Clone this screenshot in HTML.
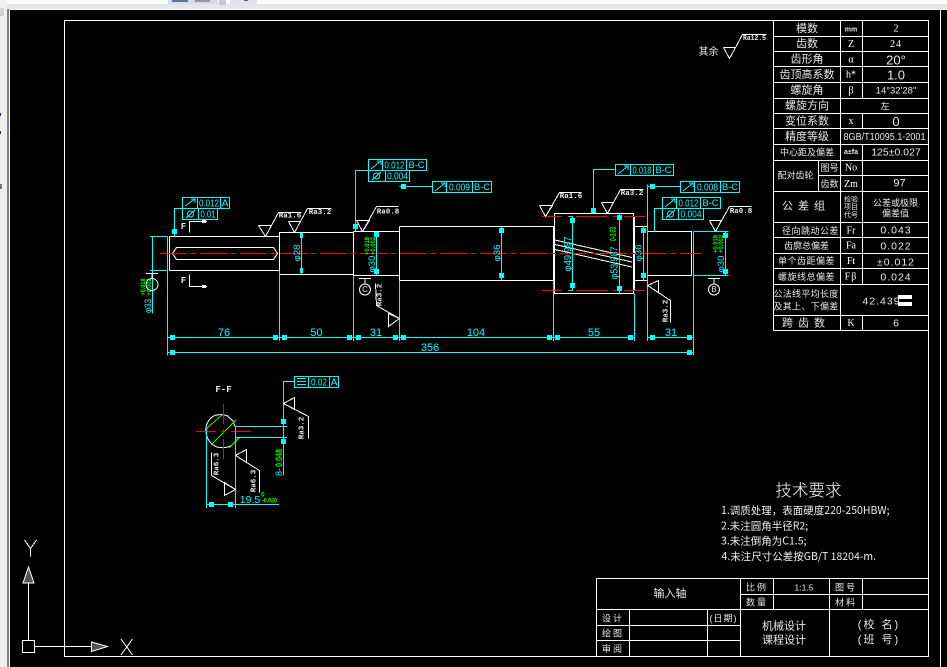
<!DOCTYPE html>
<html>
<head>
<meta charset="utf-8">
<style>
html,body{margin:0;padding:0;width:947px;height:667px;overflow:hidden;background:#000}
svg{display:block;position:absolute;left:0;top:0}
.l{fill:none;stroke-width:1;shape-rendering:crispEdges}
.w{stroke:#fff}.c{stroke:#0ff}.g{stroke:#0f0}.r{stroke:#f00}
text{font-family:"Liberation Sans","Noto Sans CJK SC",sans-serif;text-anchor:middle;dominant-baseline:central}
.t{fill:#e8e8e8;font-size:11px}
.s{fill:#e8e8e8;font-size:9px}
.u{fill:#e8e8e8;font-size:7px}
.m{fill:#fff;font-size:10px;font-family:"Liberation Serif","Noto Sans CJK SC",serif}
.d{fill:#0ff;font-size:11px}
.f{fill:#0ff;font-size:10.5px}
.q{fill:#0f0;font-size:6.5px;font-weight:bold}
.a{fill:#eee;font-size:7.5px;font-weight:bold;font-family:"Liberation Mono",monospace}
.j{fill:#eee;font-size:10.5px;text-anchor:start;font-family:"Noto Sans CJK SC","Liberation Serif",serif}
</style>
</head>
<body>
<svg width="947" height="667" viewBox="0 0 947 667" xmlns="http://www.w3.org/2000/svg">
<rect width="947" height="667" fill="#000"/>
<!-- window chrome -->
<rect x="0" y="0" width="947" height="9" fill="#e4e6ea"/>
<rect x="0" y="0" width="947" height="4" fill="#fbfbfb"/>
<rect x="168" y="0" width="50" height="4" fill="#d6dbe4"/>
<rect x="172" y="0" width="16" height="2" fill="#5577aa"/>
<rect x="195" y="0" width="15" height="2" fill="#9a9a9a"/>
<rect x="219" y="0" width="7" height="5" fill="#c8c8c8"/>
<rect x="230" y="0" width="27" height="4" fill="#e0e4ea"/>
<rect x="244" y="0" width="4" height="1" fill="#446699"/>
<rect x="0" y="0" width="7" height="667" fill="#efefef"/>
<rect x="7" y="9" width="2" height="658" fill="#808080"/>
<rect x="0" y="8" width="4" height="8" fill="#cfcfcf"/>
<rect x="0" y="113" width="1" height="3" fill="#003f8f"/>
<rect x="0" y="131" width="1" height="3" fill="#003f8f"/>
<rect x="0" y="184" width="2" height="5" fill="#777"/>
<path class="l w" d="M9.500 9.500H947M9.500 9.500V667M940.500 9.500V667"/>

<!-- drawing frame -->
<path class="l w" d="M64.500 20.500H928.500V656.500H64.500Z"/>

<!-- Parameter table -->
<path class="l w" d="M773.500 20.500V330.500M840.500 20.500V330.500M862.500 20.500V98.500M862.500 113.500V128.500M862.500 144.500V284.500M862.500 315.500V330.500M818.500 160.500V191.500
M773.500 36.500H928.500M773.500 51.500H928.500M773.500 66.500H928.500M773.500 82.500H928.500M773.500 98.500H928.500M773.500 113.500H928.500M773.500 128.500H928.500M773.500 144.500H928.500M773.500 160.500H928.500M818.500 175.500H928.500M773.500 191.500H928.500M773.500 222.500H928.500M773.500 237.500H928.500M773.500 253.500H928.500M773.500 268.500H928.500M773.500 284.500H928.500M773.500 315.500H928.500M773.500 330.500H928.500"/>
<g>
<text class="t" x="807" y="29">模数</text>
<text class="t" x="807" y="44">齿数</text>
<text class="t" x="807" y="59.500">齿形角</text>
<text class="t" x="807" y="75">齿顶高系数</text>
<text class="t" x="807" y="90.500">螺旋角</text>
<text class="t" x="807" y="106">螺旋方向</text>
<text class="t" x="807" y="121.500">变位系数</text>
<text class="t" x="807" y="137">精度等级</text>
<text class="s" x="807" y="152.500">中心距及偏差</text>
<text class="s" x="795.500" y="175.500">配对齿轮</text>
<text class="s" x="829.500" y="168">图号</text>
<text class="s" x="829.500" y="184">齿数</text>
<text class="t" x="806" y="206.500" letter-spacing="5">公差组</text>
<text class="u" x="851" y="200">检验</text>
<text class="u" x="851" y="207.500">项目</text>
<text class="u" x="851" y="215.500">代号</text>
<text class="s" x="895.500" y="203">公差或极限</text>
<text class="s" x="895.500" y="213.500">偏差值</text>
<text class="s" x="810.500" y="231" letter-spacing=".5">径向跳动公差</text>
<text class="s" x="806.500" y="246">齿廓总偏差</text>
<text class="s" x="806.500" y="261" letter-spacing=".5">单个齿距偏差</text>
<text class="s" x="806.500" y="277" letter-spacing=".5">螺旋线总偏差</text>
<text class="s" x="806" y="294" letter-spacing=".3">公法线平均长度</text>
<text class="s" x="806" y="306.500" letter-spacing=".3">及其上、下偏差</text>
<text class="t" x="806" y="323.500" letter-spacing="5">跨齿数</text>

<text class="u" x="851" y="30" style="font-weight:bold">mm</text>
<text class="m" x="851" y="44.500">Z</text>
<text class="m" x="851" y="60">α</text>
<text class="m" x="851" y="75">h*</text>
<text class="m" x="851" y="91">β</text>
<text class="m" x="851" y="121.500">x</text>
<text class="u" x="851" y="152.500" style="font-weight:bold">a±fa</text>
<text class="m" x="851" y="168">No</text>
<text class="m" x="851" y="184.500">Zm</text>
<text class="m" x="851" y="231">Fr</text>
<text class="m" x="851" y="246">Fa</text>
<text class="m" x="851" y="261.500">Ft</text>
<text class="m" x="851" y="277" letter-spacing="1">Fβ</text>
<text class="m" x="851" y="323.500">K</text>

<text class="m" x="896" y="29">2</text>
<text class="m" x="896" y="44.500" letter-spacing="1">24</text>
<text class="t" x="896" y="60" style="font-size:13px">20°</text>
<text class="t" x="896" y="75" style="font-size:13px">1.0</text>
<text class="t" x="896" y="91" style="font-size:9.500px">14°32'28"</text>
<text class="s" x="885" y="106.500">左</text>
<text class="t" x="896" y="121.500" style="font-size:13px">0</text>
<text class="t" x="884.500" y="137.500" style="font-size:10px" textLength="82" lengthAdjust="spacingAndGlyphs">8GB/T10095.1-2001</text>
<text class="t" x="896" y="152.500" style="font-size:10.500px">125±0.027</text>
<text class="t" x="899.500" y="183.500">97</text>
<text class="t" x="896" y="230.500" letter-spacing="1" style="font-size:10.500px">0.043</text>
<text class="t" x="896" y="246.500" letter-spacing="1" style="font-size:10.500px">0.022</text>
<text class="t" x="896" y="262.500" letter-spacing="1" style="font-size:10.500px">±0.012</text>
<text class="t" x="896" y="277.500" letter-spacing="1" style="font-size:10.500px">0.024</text>
<text class="t" x="881.500" y="301.500" letter-spacing="1" style="font-size:10.500px">42.439</text>
<rect x="898" y="295" width="14" height="4" fill="#fff"/>
<rect x="898" y="302" width="14" height="4" fill="#fff"/>
<text class="t" x="896" y="323.500" style="font-size:10.500px">6</text>
</g>

<!-- other roughness -->
<text class="t" x="708.500" y="52.500" style="font-size:10px">其余</text>
<path class="l w" d="M723.500 47.500H735.500L729.500 58.500L723.500 47.500M729.500 58.500L742.500 34.500H766.500"/>
<text class="a" x="754.500" y="39" textLength="23" lengthAdjust="spacingAndGlyphs">Ra12.5</text>

<!-- Shaft -->
<path class="l w" d="M169.500 236.500H279.500V274.500H353.500V231.500M169.500 270.500H279.500V232.500H353.500V275.500H399.500V231.500H353.500M399.500 226.500H553.500V280.500H399.500V226.500
M169.500 236.500V270.500
M172.500 253.500L176.500 247.500H273.500L277.500 253.500L273.500 259.500H176.500Z
M554.500 213.500H633.500V293.500H554.500ZM634.500 216.500V290.500
M634.500 226.500H647.500M634.500 280.500H647.500
M647.500 231.500H691.500V275.500H647.500M691.500 231.500V275.500
M555 240L632 257.500M555 244.500L632 262M555 249.500L632 267"/>
<path class="l r" stroke-dasharray="27 4 5 4" d="M160 253.500H702"/>
<path class="l r" d="M542 216.500H562M568 216.500H573M576 216.500H607M613 216.500H618M624 216.500H645M542 290.500H562M568 290.500H573M576 290.500H607M613 290.500H618M624 290.500H645"/>

<!-- Dimension lines -->
<path class="l c" d="M167.500 236.500V355.500M279.500 270.500V341M353.500 275.500V341M399.500 280.500V341M553.500 280.500V341M634.500 293.500V341M647.500 184.500V341M693.500 231.500V355.500
M167.500 337.500H634.500M647.500 337.500H693.500
M167.500 352.500H693.500
M150 236.500H167.500M150 270.500H167.500M152.500 236.500V313.500
M301.500 232.500V274.500M376.500 231.500V275.500M501.500 226.500V280.500M572.500 216.500V290.500M568.500 216.500H572.500M568.500 290.500H572.500M619.500 213.500V293.500M643.500 226.500V280.500M725.500 231.500V275.500M693.500 231.500H728.500M693.500 275.500H728.500"/>
<path fill="#0ff" d="M170 335h5v5h-5zM273 335h5v5h-5zM282 335h5v5h-5zM347 335h5v5h-5zM356 335h5v5h-5zM393 335h5v5h-5zM401 335h5v5h-5zM547 335h5v5h-5zM555 335h5v5h-5zM628 335h5v5h-5zM650 335h5v5h-5zM687 335h5v5h-5zM170 350h5v5h-5zM687 350h5v5h-5z
M172 229h5v5h-5zM353 224h5v5h-5zM591 208h5v5h-5zM401 184h5v5h-5zM650 184h5v5h-5z
M300 233h3v5h-3zM300 268h3v5h-3zM374 232h5v5h-5zM374 269h5v5h-5zM499 228h5v5h-5zM499 273h5v5h-5zM570 218h5v5h-5zM570 283h5v5h-5zM617 215h5v5h-5zM617 286h5v5h-5zM641 228h5v5h-5zM641 273h5v5h-5zM723 233h5v5h-5zM723 269h5v5h-5z
M209 502h5v5h-5zM228 502h5v5h-5zM281 419h5v5h-5zM281 439h5v5h-5z"/>
<text class="d" x="224" y="333">76</text>
<text class="d" x="316.500" y="333">50</text>
<text class="d" x="376" y="333">31</text>
<text class="d" x="476" y="333">104</text>
<text class="d" x="594" y="333">55</text>
<text class="d" x="671" y="333">31</text>
<text class="d" x="430" y="348">356</text>

<text class="d" transform="translate(148 306) rotate(-90)" style="font-size:9px" textLength="14" lengthAdjust="spacingAndGlyphs">φ33</text>
<text class="q" transform="translate(143.500 287) rotate(-90)" textLength="17" lengthAdjust="spacingAndGlyphs">+0.018</text>
<text class="q" transform="translate(149.500 287) rotate(-90)" textLength="17" lengthAdjust="spacingAndGlyphs">+0.002</text>
<text class="d" transform="translate(297.500 253) rotate(-90)" style="font-size:9.500px">φ28</text>
<text class="d" transform="translate(372.500 264) rotate(-90)" style="font-size:9.500px">φ30</text>
<text class="q" transform="translate(367.500 246) rotate(-90)" textLength="18" lengthAdjust="spacingAndGlyphs">+0.018</text>
<text class="q" transform="translate(373.500 246) rotate(-90)" textLength="18" lengthAdjust="spacingAndGlyphs">+0.002</text>
<text class="d" transform="translate(497.500 253) rotate(-90)" style="font-size:9.500px">φ36</text>
<text class="d" transform="translate(568.500 254) rotate(-90)" style="font-size:10px" textLength="35" lengthAdjust="spacingAndGlyphs">φ49.987</text>
<text class="d" transform="translate(615 263) rotate(-90)" style="font-size:10px" textLength="33" lengthAdjust="spacingAndGlyphs">φ53.987</text>
<text class="q" transform="translate(613 234) rotate(-90)" textLength="14" lengthAdjust="spacingAndGlyphs" style="font-size:9px">0-0.03</text>
<text class="d" transform="translate(639 253) rotate(-90)" style="font-size:9.500px">φ36</text>
<text class="d" transform="translate(721.500 264) rotate(-90)" style="font-size:9.500px">φ30</text>
<text class="q" transform="translate(716 244) rotate(-90)" textLength="18" lengthAdjust="spacingAndGlyphs">+0.018</text>
<text class="q" transform="translate(721.500 244) rotate(-90)" textLength="18" lengthAdjust="spacingAndGlyphs">+0.002</text>

<!-- datum symbols -->
<path class="l w" d="M146 273.500H158M152 273.500V278"/>
<circle cx="152" cy="284.500" r="6" fill="none" stroke="#fff"/>
<path class="l w" d="M359 278.500H371M365 278.500V284"/>
<circle cx="365" cy="289.500" r="5.500" fill="none" stroke="#fff"/>
<text class="s" x="365" y="289.500" style="font-size:8px">C</text>
<path class="l w" d="M708 278.500H720M714 278.500V284"/>
<circle cx="714" cy="289.500" r="5.500" fill="none" stroke="#fff"/>
<text class="s" x="714" y="289.500" style="font-size:8px">B</text>

<!-- F section marks -->
<path class="l w" d="M189.500 232.500V221.500H207M189.500 274.500V286.500H207"/>
<path fill="#fff" d="M202 220h4v3h-4zM202 285h4v3h-4z"/>
<text class="a" x="183.500" y="227" style="font-size:9px">F</text>
<text class="a" x="183.500" y="281" style="font-size:9px">F</text>

<!-- Roughness -->
<path class="l w" d="M258.500 225.500H271.500L265.500 236.500L258.500 225.500M265.500 236.500L278.500 212.500H301.500"/>
<text class="a" x="290" y="216.500">Ra1.6</text>
<path class="l w" d="M288.500 221.500H300.500L294.500 232.500L288.500 221.500M294.500 232.500L307.500 208.500H331.500"/>
<text class="a" x="320" y="213">Ra3.2</text>
<path class="l w" d="M356.500 220.500H369.500L362.500 231.500L356.500 220.500M362.500 231.500L376.500 206.500H398.500"/>
<text class="a" x="388" y="212.500">Ra0.8</text>
<path class="l w" d="M539.500 205.500H552.500L545.500 216.500L539.500 205.500M545.500 216.500L559.500 192.500H581.500"/>
<text class="a" x="571" y="197">Ra1.6</text>
<path class="l w" d="M601.500 202.500H613.500L607.500 213.500L601.500 202.500M607.500 213.500L620.500 189.500H643.500"/>
<text class="a" x="632" y="194">Ra3.2</text>
<path class="l w" d="M709.500 220.500H721.500L715.500 231.500L709.500 220.500M715.500 231.500L729.500 206.500H751.500"/>
<text class="a" x="741" y="212">Ra0.8</text>
<path class="l w" d="M647.500 285.500L658.500 280.500V292.500L647.500 285.500L670.500 300.500V322.500"/>
<text class="a" transform="translate(666.500 311) rotate(-90)">Ra3.2</text>
<path class="l w" d="M399.500 318.500L388.500 313.500V326.500L399.500 318.500L376.500 305.500L375.500 283.500"/>
<text class="a" transform="translate(380.500 295) rotate(-90)">Ra3.2</text>

<!-- FCF -->
<g>
<path class="l c" d="M182.500 197.500H229.500V208.500H182.500ZM197.500 197.500V208.500M220.500 197.500V208.500M182.500 208.500V219.500H217.500V208.500M198.500 208.500V219.500M182.500 208.500H174.500V236.500"/>
<path class="l c" d="M185 206L195 199M191 199h4v4M186 218L195 210"/><ellipse cx="190.500" cy="214" rx="3" ry="3" fill="none" stroke="#0ff"/>
<text class="f" x="209" y="203.500" textLength="20" lengthAdjust="spacingAndGlyphs">0.012</text><text class="f" x="225" y="203.500">A</text><text class="f" x="208" y="214.500" textLength="15" lengthAdjust="spacingAndGlyphs">0.01</text>

<path class="l c" d="M368.500 159.500H426.500V170.500H368.500ZM382.500 159.500V170.500M406.500 159.500V170.500M368.500 170.500V181.500H409.500V170.500M385.500 170.500V181.500M368.500 170.500H355.500V231.500"/>
<path class="l c" d="M371 169L381 161M377 161h4v4M372 180L381 172"/><ellipse cx="376.500" cy="176" rx="3" ry="3" fill="none" stroke="#0ff"/>
<text class="f" x="394.500" y="165.500" textLength="20" lengthAdjust="spacingAndGlyphs">0.012</text><text class="f" x="416.500" y="165.500" style="font-size:9.500px" textLength="16" lengthAdjust="spacingAndGlyphs">B-C</text><text class="f" x="397.500" y="176.500" textLength="21" lengthAdjust="spacingAndGlyphs">0.004</text>

<path class="l c" d="M432.500 181.500H491.500V192.500H432.500ZM446.500 181.500V192.500M472.500 181.500V192.500M432.500 186.500H399.500"/>
<path class="l c" d="M435 191L445 183M441 183h4v4"/>
<text class="f" x="459.500" y="187.500" textLength="21" lengthAdjust="spacingAndGlyphs">0.009</text><text class="f" x="482" y="187.500" style="font-size:9.500px" textLength="16" lengthAdjust="spacingAndGlyphs">B-C</text>

<path class="l c" d="M615.500 164.500H673.500V175.500H615.500ZM630.500 164.500V175.500M653.500 164.500V175.500M615.500 169.500H593.500V213.500"/>
<path class="l c" d="M618 174L628 166M624 166h4v4"/>
<text class="f" x="642" y="170.500" textLength="19" lengthAdjust="spacingAndGlyphs">0.018</text><text class="f" x="663.500" y="170.500" style="font-size:9.500px" textLength="16" lengthAdjust="spacingAndGlyphs">B-C</text>

<path class="l c" d="M680.500 181.500H739.500V192.500H680.500ZM694.500 181.500V192.500M720.500 181.500V192.500M680.500 186.500H647.500"/>
<path class="l c" d="M683 191L693 183M689 183h4v4"/>
<text class="f" x="707.500" y="187.500" textLength="21" lengthAdjust="spacingAndGlyphs">0.008</text><text class="f" x="730" y="187.500" style="font-size:9.500px" textLength="16" lengthAdjust="spacingAndGlyphs">B-C</text>

<path class="l c" d="M662.500 197.500H720.500V208.500H662.500ZM676.500 197.500V208.500M700.500 197.500V208.500M662.500 208.500V219.500H703.500V208.500M678.500 208.500V219.500M662.500 208.500H654.500V231.500"/>
<path class="l c" d="M665 207L675 199M671 199h4v4M666 218L675 210"/><ellipse cx="670.500" cy="214" rx="3" ry="3" fill="none" stroke="#0ff"/>
<text class="f" x="688.500" y="203.500" textLength="20" lengthAdjust="spacingAndGlyphs">0.012</text><text class="f" x="710.500" y="203.500" style="font-size:9.500px" textLength="16" lengthAdjust="spacingAndGlyphs">B-C</text><text class="f" x="691" y="214.500" textLength="21" lengthAdjust="spacingAndGlyphs">0.004</text>

<path class="l c" d="M294.500 376.500H338.500V387.500H294.500ZM308.500 376.500V387.500M329.500 376.500V387.500M294.500 381.500H283.500V475.500M297 378.500H306M297 381.500H306M297 384.500H306"/>
<text class="f" x="319" y="382.500" textLength="16" lengthAdjust="spacingAndGlyphs">0.02</text><text class="f" x="334" y="382.500">A</text>
</g>

<!-- Section F-F -->
<text class="a" x="223.500" y="390" style="font-size:9px">F-F</text>
<path fill="none" stroke="#fff" stroke-width="1" d="M235 426.500L233 421L227 415.500 Q216 413 211 418 Q204 425 206.500 435 Q209 444 217 447 Q226 449 232 445 L239 437.500 H235"/>
<path class="l g" d="M207 428L222 415M211 445L236 420M229 448L240 437"/>
<path class="l r" d="M196 431.500H216M221 431.500H226M231 431.500H251M223.500 404V424M223.500 429V434M223.500 439V459"/>
<path class="l c" d="M235.500 426.500H287M235.500 437.500H287M235.500 426.500V508M206.500 428V508M206.500 504.500H279"/>
<text class="d" x="250" y="500" style="font-size:10.500px">19.5</text>
<text class="q" x="261" y="495" style="text-anchor:start">0</text>
<text class="q" x="262" y="501" style="text-anchor:start" textLength="15" lengthAdjust="spacingAndGlyphs">-0.020</text>
<text class="d" transform="translate(279 472) rotate(-90)" style="font-size:9px">8-</text>
<text class="q" transform="translate(279 458) rotate(-90)" style="font-size:9px" textLength="18" lengthAdjust="spacingAndGlyphs">0.048</text>

<path class="l w" d="M283.500 403.500L294.500 397.500V409.500L283.500 403.500L308.500 416.500V438.500"/>
<text class="a" transform="translate(302.500 428) rotate(-90)">Ra3.2</text>
<path class="l w" d="M235.500 455.500L246.500 449.500V462.500L235.500 455.500L259.500 470.500V492.500"/>
<text class="a" transform="translate(254.500 481) rotate(-90)">Ra6.3</text>
<path class="l w" d="M235.500 489.500L224.500 482.500V495.500L235.500 489.500L211.500 475.500V452.500"/>
<text class="a" transform="translate(217.500 464) rotate(-90)">Ra6.3</text>

<!-- UCS -->
<path class="l w" d="M22.500 640.500H34.500V652.500H22.500ZM28.500 640.500V583.500M34.500 646.500H91.500M24.500 540L30.500 548.500L36.500 540M30.500 548.500V556.500M121 639L132.500 655M132.500 639L121 655"/>
<path d="M28.500 567L34 583H23Z" fill="#555" stroke="#fff"/>
<path d="M91.500 642L107.500 646.500L91.500 651.500Z" fill="#555" stroke="#fff"/>

<!-- Technical requirements -->
<text class="t" x="808.500" y="491" style="font-size:16.500px;fill:#fff;font-weight:300">技术要求</text>
<text class="j" x="721" y="510.500">1.调质处理，表面硬度220-250HBW;</text>
<text class="j" x="721" y="526">2.未注圆角半径R2;</text>
<text class="j" x="721" y="541">3.未注倒角为C1.5;</text>
<text class="j" x="721.500" y="556.500">4.未注尺寸公差按GB/T 18204-m.</text>

<!-- Title block -->
<path class="l w" d="M596.500 578.500H928.500M596.500 578.500V656.500M596.500 609.500H928.500M740.500 594.500H928.500M596.500 625.500H740.500M596.500 640.500H740.500M629.500 609.500V656.500M707.500 609.500V656.500M740.500 578.500V656.500M773.500 578.500V609.500M829.500 578.500V656.500M862.500 578.500V609.500"/>
<text class="t" x="670" y="594">输入轴</text>
<text class="s" x="757" y="587.500" letter-spacing="2">比例</text>
<text class="s" x="804" y="587.500" style="font-size:8.500px">1:1.5</text>
<text class="s" x="846" y="587.500" letter-spacing="2">图号</text>
<text class="s" x="757" y="602.500" letter-spacing="2">数量</text>
<text class="s" x="846" y="602.500" letter-spacing="2">材料</text>
<text class="s" x="613" y="618.500" letter-spacing="2">设计</text>
<text class="s" x="723.500" y="618.500" letter-spacing="1">(日期)</text>
<text class="s" x="613" y="633.500" letter-spacing="2">绘图</text>
<text class="s" x="613" y="649" letter-spacing="2">审阅</text>
<text class="t" x="784" y="626.500">机械设计</text>
<text class="t" x="784" y="640.500">课程设计</text>
<text class="t" x="879" y="625" letter-spacing="2">(校 名)</text>
<text class="t" x="879" y="640" letter-spacing="2">(班 号)</text>
</svg>
</body>
</html>
